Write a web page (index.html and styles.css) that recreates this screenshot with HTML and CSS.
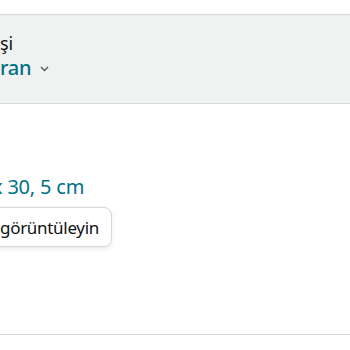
FILE: index.html
```html
<!DOCTYPE html>
<html lang="tr">
<head>
  <meta charset="UTF-8">
  <meta name="viewport" content="width=device-width, initial-scale=1">
  <title>Ürün seçenekleri</title>
  <link rel="stylesheet" href="styles.css">
</head>
<body>

  <div class="option-box">
    <div class="option-label">şi</div>
    <div class="option-value">
      <span>ran</span>
      <svg class="chevron" width="9" height="6" viewBox="0 0 9 6" aria-hidden="true">
        <path d="M1 1l3.5 3.5L8 1" fill="none" stroke="#565959" stroke-width="1.4"/>
      </svg>
    </div>
  </div>

  <div class="size">x 30, 5 cm</div>

  <div class="actions">
    <button class="view-btn">görüntüleyin</button>
  </div>

  <hr class="divider">

</body>
</html>
```

FILE: styles.css
```css
/* Temel ayarlar */
* { box-sizing: border-box; margin: 0; padding: 0; }

body {
  font-family: 'Noto Sans', 'DejaVu Sans', sans-serif;
  background: #fff;
  color: #0f1111;
  padding-top: 14px;
  overflow: hidden;
}

.option-box {
  background: #f0f2f2;
  border-top: 1px solid #d5d9d9;
  border-bottom: 1px solid #d5d9d9;
  height: 90px;
  padding-top: 16px;
}
.option-label {
  font-size: 18px;
  line-height: 24px;
  letter-spacing: -0.2px;
}
.option-value {
  display: flex;
  align-items: center;
  gap: 9px;
  font-size: 20px;
  line-height: 26px;
  font-weight: 500;
  color: #007185;
  letter-spacing: -0.3px;
}
.chevron { margin-top: 2px; }

.size {
  margin-top: 70px;
  margin-left: -8px;
  font-size: 20px;
  line-height: 26px;
  letter-spacing: -0.2px;
  color: #007185;
}

.actions { margin-top: 7px; }
.view-btn {
  font-family: inherit;
  font-size: 17px;
  letter-spacing: -0.3px;
  color: #0f1111;
  background: #fff;
  border: 1px solid #d5d9d9;
  border-radius: 8px;
  box-shadow: 0 2px 5px rgba(213, 217, 217, 0.5);
  height: 40px;
  margin-left: -31px;
  padding: 0 12px 0 30px;
}

.divider {
  border: none;
  border-top: 1px solid #d5d9d9;
  margin-top: 87px;
}
```
